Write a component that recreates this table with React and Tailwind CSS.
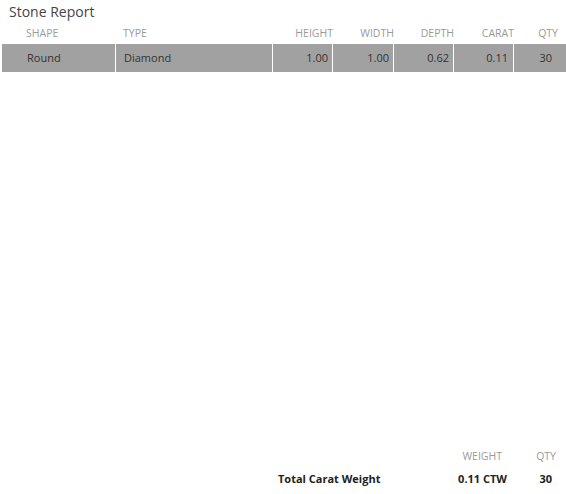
import React from "react";

const stones = [
  { shape: "Round", type: "Diamond", height: "1.00", width: "1.00", depth: "0.62", carat: "0.11", qty: "30" },
];

const StoneReport = () => {
  return (
    <div className="h-[494px] w-[566px] flex flex-col bg-white font-['Open_Sans',sans-serif] text-[#333]">
      <h1 className="pl-[9px] pt-[1px] text-[14px] leading-[22px] text-[#444]">Stone Report</h1>

      {/* Header */}
      <div className="ml-[2px] mr-[8px] flex h-[21px] items-center text-[10.5px] text-[#9a9a9a]">
        <div className="w-[114px] pl-[24px]">SHAPE</div>
        <div className="w-[157px] pl-[7px]">TYPE</div>
        <div className="w-[60px] text-right">HEIGHT</div>
        <div className="w-[61px] text-right">WIDTH</div>
        <div className="w-[60px] text-right">DEPTH</div>
        <div className="w-[60px] text-right">CARAT</div>
        <div className="flex-1 text-right">QTY</div>
      </div>

      {/* Rows */}
      {stones.map((s, i) => (
        <div key={i} className="ml-[2px] flex h-[28px] bg-[#a1a1a1] text-[11px]">
          <div className="w-[114px] border-r border-white flex items-center pl-[25px]">{s.shape}</div>
          <div className="w-[157px] border-r border-white flex items-center pl-[8px]">{s.type}</div>
          <div className="w-[60px] border-r border-white flex items-center justify-end pr-[4px]">{s.height}</div>
          <div className="w-[61px] border-r border-white flex items-center justify-end pr-[4px]">{s.width}</div>
          <div className="w-[60px] border-r border-white flex items-center justify-end pr-[4px]">{s.depth}</div>
          <div className="w-[60px] border-r border-white flex items-center justify-end pr-[5px]">{s.carat}</div>
          <div className="flex-1 flex items-center justify-end pr-[14px]">{s.qty}</div>
        </div>
      ))}

      {/* Totals */}
      <div className="mt-auto mb-[4px] flex flex-col items-end">
        <div className="flex h-[22px] items-center pr-[10px] text-[10.5px] text-[#9a9a9a]">
          <div className="w-[70px] text-right">WEIGHT</div>
          <div className="w-[54px] text-right">QTY</div>
        </div>
        <div className="flex h-[22px] items-center pr-[14px] text-[11px] font-bold text-[#222]">
          <div className="w-[155px] text-left">Total Carat Weight</div>
          <div className="w-[74px] text-right">0.11 CTW</div>
          <div className="w-[45px] text-right">30</div>
        </div>
      </div>
    </div>
  );
};

export default function App() {
  return <StoneReport />;
}
